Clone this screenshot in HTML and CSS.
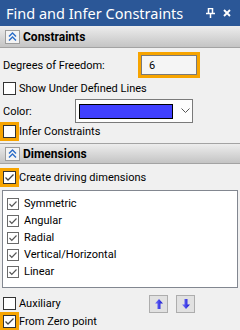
FILE: index.html
```html
<!DOCTYPE html>
<html>
    <head>
        <title>Find and Infer Constraints</title>
        <meta charset="utf-8"/>
        <link rel="stylesheet" href="styles.css">
    </head>
    <body>
        <div class="panel">
            <div class="titlebar">
                <span class="title">Find and Infer Constraints</span>
                <span class="tools">
                    <svg width="9" height="10" viewBox="0 0 9 10"><path d="M2.5 0.5H6.5M2.5 0V5.5M6.5 0V5.5M0 5.5H9M4.5 5.5V10" stroke="#fff" stroke-width="1.5" fill="none"/></svg>
                    <svg width="8" height="8" viewBox="0 0 8 8"><path d="M1 1L7 7M7 1L1 7" stroke="#fff" stroke-width="1.9"/></svg>
                </span>
            </div>

            <div class="head">
                <span class="fold"><svg width="9" height="10" viewBox="0 0 9 10"><path d="M1 4.5L4.5 1L8 4.5M1 8.5L4.5 5L8 8.5" stroke="#2a6cc8" stroke-width="1.4" fill="none"/></svg></span>
                <span>Constraints</span>
            </div>
            <div class="sect first">
                <div class="row dof">
                    <span>Degrees of Freedom:</span>
                    <span class="hl-field"><span class="num">6</span></span>
                </div>
                <div class="row check-row">
                    <span class="box"></span>
                    <span>Show Under Defined Lines</span>
                </div>
                <div class="row color-row">
                    <span>Color:</span>
                    <span class="combo">
                        <span class="swatch"></span>
                        <svg width="9" height="6" viewBox="0 0 9 6"><path d="M0.5 0.5L4.5 4.5L8.5 0.5" stroke="#555" stroke-width="1" fill="none"/></svg>
                    </span>
                </div>
                <div class="row hl-row infer">
                    <span class="hl"><span class="box"></span></span>
                    <span>Infer Constraints</span>
                </div>
            </div>

            <div class="head second">
                <span class="fold"><svg width="9" height="10" viewBox="0 0 9 10"><path d="M1 4.5L4.5 1L8 4.5M1 8.5L4.5 5L8 8.5" stroke="#2a6cc8" stroke-width="1.4" fill="none"/></svg></span>
                <span>Dimensions</span>
            </div>
            <div class="sect">
                <div class="row hl-row create">
                    <span class="hl"><span class="box on"><svg width="11" height="11" viewBox="0 0 11 11"><path d="M1.5 5.5L4 8L9.5 2.5" stroke="#444" stroke-width="1.3" fill="none"/></svg></span></span>
                    <span>Create driving dimensions</span>
                </div>
                <ul class="list">
                    <li><span class="box small"><svg width="10" height="10" viewBox="0 0 10 10"><path d="M1.5 5L3.8 7.3L8.5 2.5" stroke="#555" stroke-width="1.2" fill="none"/></svg></span>Symmetric</li>
                    <li><span class="box small"><svg width="10" height="10" viewBox="0 0 10 10"><path d="M1.5 5L3.8 7.3L8.5 2.5" stroke="#555" stroke-width="1.2" fill="none"/></svg></span>Angular</li>
                    <li><span class="box small"><svg width="10" height="10" viewBox="0 0 10 10"><path d="M1.5 5L3.8 7.3L8.5 2.5" stroke="#555" stroke-width="1.2" fill="none"/></svg></span>Radial</li>
                    <li><span class="box small"><svg width="10" height="10" viewBox="0 0 10 10"><path d="M1.5 5L3.8 7.3L8.5 2.5" stroke="#555" stroke-width="1.2" fill="none"/></svg></span>Vertical/Horizontal</li>
                    <li><span class="box small"><svg width="10" height="10" viewBox="0 0 10 10"><path d="M1.5 5L3.8 7.3L8.5 2.5" stroke="#555" stroke-width="1.2" fill="none"/></svg></span>Linear</li>
                </ul>
                <div class="row check-row aux">
                    <span class="box"></span>
                    <span>Auxiliary</span>
                    <span class="arrows">
                        <span class="btn"><svg width="8" height="10" viewBox="0 0 8 10"><defs><linearGradient id="ga" x1="0" x2="1"><stop offset="0" stop-color="#7a7aff"/><stop offset="1" stop-color="#1010d0"/></linearGradient></defs><path d="M4 0L8 4.5H5.5V10H2.5V4.5H0Z" fill="url(#ga)"/></svg></span>
                        <span class="btn"><svg width="8" height="10" viewBox="0 0 8 10"><defs><linearGradient id="gb" x1="0" x2="1"><stop offset="0" stop-color="#7a7aff"/><stop offset="1" stop-color="#1010d0"/></linearGradient></defs><path d="M4 10L8 5.5H5.5V0H2.5V5.5H0Z" fill="url(#gb)"/></svg></span>
                    </span>
                </div>
                <div class="row hl-row zero">
                    <span class="hl"><span class="box on"><svg width="11" height="11" viewBox="0 0 11 11"><path d="M1.5 5.5L4 8L9.5 2.5" stroke="#444" stroke-width="1.3" fill="none"/></svg></span></span>
                    <span>From Zero point</span>
                </div>
            </div>
        </div>
    </body>
</html>
```

FILE: styles.css
```css
*{
    margin: 0;
    padding: 0;
    box-sizing: border-box;
}
ul,li{
    list-style-type: none;
}
body{
    font-family: Roboto, "Noto Sans", sans-serif;
    font-size: 11px;
    color: #000;
    background-color: #f0f0f0;
}
.panel{
    width: 240px;
    height: 330px;
    overflow: hidden;
    background-color: #f0f0f0;
}
.titlebar{
    height: 26px;
    background-color: #2b5797;
    color: #fff;
    display: flex;
    align-items: center;
    padding: 0 9px 0 6px;
}
.titlebar .title{
    flex: 1;
    font-family: "Noto Sans", sans-serif;
    font-size: 14.5px;
}
.titlebar .tools{
    display: flex;
    align-items: center;
    gap: 8px;
}
.head{
    height: 22px;
    background: linear-gradient(#ededed, #c4c4c4);
    border-bottom: 1px solid #a3a3a3;
    display: flex;
    align-items: center;
    gap: 3px;
    padding-left: 5px;
    font-weight: bold;
    font-size: 12px;
}
.head.second{
    height: 21px;
    border-top: 1px solid #a3a3a3;
}
.head .fold{
    width: 15px;
    height: 14px;
    border: 1px solid #9c9c9c;
    background-color: #f4f4f4;
    display: flex;
    align-items: center;
    justify-content: center;
}
.sect{
    padding-top: 4px;
}
.sect.first{
    padding-bottom: 2px;
}
.row{
    display: flex;
    align-items: center;
    padding-left: 3px;
}
.dof{
    height: 26px;
}
.hl-field{
    margin-left: auto;
    margin-right: 40px;
    width: 62px;
    height: 26px;
    border: 3px solid #f7a400;
}
.hl-field .num{
    display: flex;
    align-items: center;
    height: 100%;
    padding-left: 7px;
    border: 1px solid #7a7a7a;
    background-color: #f5f5f5;
}
.check-row{
    height: 20px;
    gap: 3px;
}
.box{
    width: 13px;
    height: 13px;
    border: 1px solid #333;
    background-color: #fff;
    display: flex;
    align-items: center;
    justify-content: center;
    flex-shrink: 0;
}
.box.small{
    width: 12px;
    height: 12px;
    border-color: #6a6a6a;
}
.color-row{
    height: 24px;
    margin-top: 1px;
}
.combo{
    margin-left: auto;
    margin-right: 47px;
    width: 118px;
    height: 24px;
    border: 1px solid #7a7a7a;
    background-color: #fdfdfd;
    display: flex;
    align-items: center;
    gap: 8px;
    padding-left: 3px;
}
.combo .swatch{
    width: 94px;
    height: 15px;
    background-color: #4040ff;
    border: 1px solid #000;
}
.hl-row{
    height: 19px;
    padding-left: 0;
}
.infer{
    margin-top: -1px;
}
.hl{
    width: 19px;
    height: 19px;
    border: 3px solid #f7a400;
    flex-shrink: 0;
}
.list{
    margin: 3px 2px 0;
    height: 98px;
    border: 1px solid #828790;
    background-color: #fff;
    padding-top: 4px;
}
.list li{
    height: 17px;
    display: flex;
    align-items: center;
    gap: 5px;
    padding-left: 4px;
}
.aux{
    margin-top: 5px;
}
.arrows{
    margin-left: auto;
    margin-right: 45px;
    display: flex;
    gap: 8px;
    align-self: flex-end;
}
.btn{
    width: 19px;
    height: 18px;
    border: 1px solid #adadad;
    background-color: #e1e1e1;
    display: flex;
    align-items: center;
    justify-content: center;
}
.zero{
    margin-top: -1px;
}
```
